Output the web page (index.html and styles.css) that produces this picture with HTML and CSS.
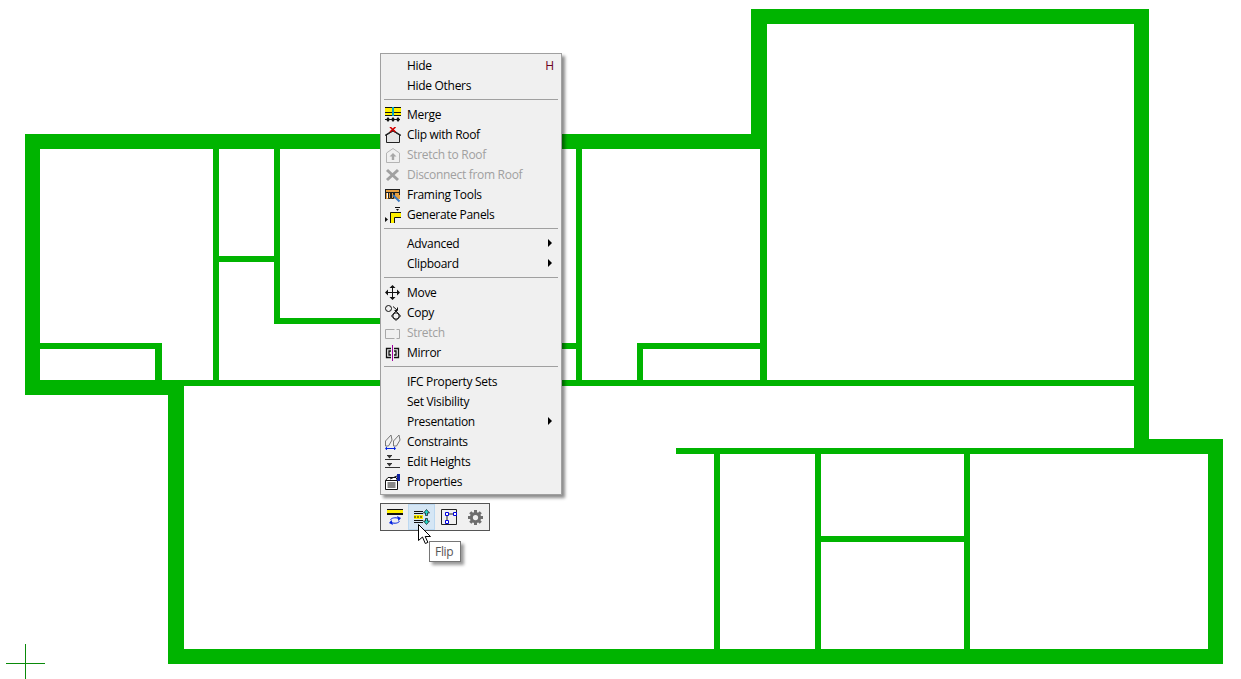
FILE: index.html
```html
<!DOCTYPE html>
<html lang="en">
<head>
  <meta charset="UTF-8">
  <title>Floor plan context menu</title>
  <link rel="stylesheet" href="styles.css">
</head>
<body>
  <!-- drawing canvas -->
  <svg class="plan" width="1241" height="679" viewBox="0 0 1241 679">
    <path class="walls" fill-rule="evenodd" d="M25 134H751V9H1149V439H1223V664H168V395H25ZM40 149V343H162V380H213V149ZM219 149V256H274V149ZM280 149V318H450V343H576V149ZM219 262V380H576V349H444V324H274V262ZM582 149V380H637V343H760V149ZM643 349V380H760V349ZM40 349V380H155V349ZM767 24V380H1134V24ZM184 386V649H714V454H676V448H1134V386ZM720 454V649H815V454ZM821 454V536H964V454ZM821 542V649H964V542ZM970 454V649H1208V454Z"/>
    <path class="cross" d="M6 663.5H45M25.5 644V679"/>
  </svg>

  <div class="menu">
    <div class="row"><span class="ico"></span><span class="label">Hide</span><span class="key">H</span></div>
    <div class="row"><span class="ico"></span><span class="label">Hide Others</span></div>
    <div class="sep"></div>
    <div class="row">
      <span class="ico"><svg width="16" height="16" viewBox="0 0 16 16"><path fill="#111" d="M0 0h16v1H0zM0 5h16v1H0zM0 8h16v1H0z"/><path fill="#fff000" d="M0 1h16v4H0zM0 6h16v2H0z"/><path fill="#00a8c8" d="M7 0h2v9H7z"/><path fill="#111" d="M0 12h15v1H0zM3 10l2 2.500L3 15l-2-2.500zM8 10l2 2.500L8 15l-2-2.500zM13 10l2 2.500-2 2.500-2-2.500z"/></svg></span>
      <span class="label">Merge</span>
    </div>
    <div class="row">
      <span class="ico"><svg width="16" height="16" viewBox="0 0 16 16"><path fill="#e4e4e4" stroke="#222" d="M1.500 15.500V8L8 4l6.500 4v7.500z"/><path fill="none" stroke="#222" stroke-width="1.300" d="M0 8.500 8 3.500l8 5"/><path stroke="#d00000" stroke-width="1.600" d="M5 0l5.500 5M10.500 0 5 5"/></svg></span>
      <span class="label">Clip with Roof</span>
    </div>
    <div class="row off">
      <span class="ico"><svg width="16" height="16" viewBox="0 0 16 16"><path fill="none" stroke="#b4b4b4" d="M1.500 15.500V6L8 1.500 14.500 6v9.500z"/><path fill="#a8a8a8" d="M8 6l3.500 3.500H9.200V13H6.800V9.500H4.500z"/></svg></span>
      <span class="label">Stretch to Roof</span>
    </div>
    <div class="row off">
      <span class="ico"><svg width="16" height="16" viewBox="0 0 16 16"><path stroke="#a0a0a0" stroke-width="3" d="M2 3l11 10M13 3 2 13"/></svg></span>
      <span class="label">Disconnect from Roof</span>
    </div>
    <div class="row">
      <span class="ico"><svg width="16" height="16" viewBox="0 0 16 16"><path fill="#e8a040" d="M0 2h15v10H0z"/><path fill="#fff" d="M2 6h1v5H2zm3 0h1v5H5zm3 0h1v4H8z"/><path fill="none" stroke="#222" d="M.5 2.500h14M.5 5.500h14M.5 2v10M3.500 5.500v6h2v-6M6.500 5.500v6h2v-6M9.500 5.500v4M14.500 2v6"/><path stroke="#3a78c0" stroke-width="2" d="M8 8l6.500 6.500"/></svg></span>
      <span class="label">Framing Tools</span>
    </div>
    <div class="row">
      <span class="ico"><svg width="16" height="16" viewBox="0 0 16 16"><path fill="#fff000" d="M5 16V5h11v5H9.500v6z"/><path fill="none" stroke="#111" d="M5.500 16V5.500H16M9.500 16v-5.500H16"/><path fill="#111" d="M0 10l3 2.500L0 15zM10 0h5v1h-5zM11 2h3l-1.500 2z"/></svg></span>
      <span class="label">Generate Panels</span>
    </div>
    <div class="sep"></div>
    <div class="row"><span class="ico"></span><span class="label">Advanced</span><span class="arrow"></span></div>
    <div class="row"><span class="ico"></span><span class="label">Clipboard</span><span class="arrow"></span></div>
    <div class="sep"></div>
    <div class="row">
      <span class="ico"><svg width="16" height="16" viewBox="0 0 16 16"><path fill="none" stroke="#111" d="M7.500 2v12M2 7.500h12"/><path fill="#111" d="M7.500 0l3 3h-6zM7.500 15l-3-3h6zM0 7.500l3-3v6zM15 7.500l-3 3v-6z"/></svg></span>
      <span class="label">Move</span>
    </div>
    <div class="row">
      <span class="ico"><svg width="16" height="16" viewBox="0 0 16 16"><circle cx="3.500" cy="3.500" r="3" fill="none" stroke="#111"/><path fill="none" stroke="#111" d="M11 6 15.500 11 11 15.500 6.500 11z"/><circle cx="11" cy="11" r="3.200" fill="none" stroke="#111"/><path fill="none" stroke="#111" d="M8 1.500l4 3.500M9.500 5.500H12.500V2.500"/></svg></span>
      <span class="label">Copy</span>
    </div>
    <div class="row off">
      <span class="ico"><svg width="16" height="16" viewBox="0 0 16 16"><path fill="none" stroke="#a8a8a8" d="M9.500 4.500H.5v9h9M11.500 4.500h3v9h-3"/></svg></span>
      <span class="label">Stretch</span>
    </div>
    <div class="row">
      <span class="ico"><svg width="16" height="16" viewBox="0 0 16 16"><path fill="none" stroke="#111" stroke-width="1.300" d="M6 3.500H1.500v9H6M6 6H4v4h2M9 3.500h4.500v9H9M9 6h2v4H9"/><path stroke="#a000a0" d="M7.500 0v16"/></svg></span>
      <span class="label">Mirror</span>
    </div>
    <div class="sep"></div>
    <div class="row"><span class="ico"></span><span class="label">IFC Property Sets</span></div>
    <div class="row"><span class="ico"></span><span class="label">Set Visibility</span></div>
    <div class="row"><span class="ico"></span><span class="label">Presentation</span><span class="arrow"></span></div>
    <div class="row">
      <span class="ico"><svg width="16" height="16" viewBox="0 0 16 16"><path fill="none" stroke="#777" d="M.5 12V7L6 1l1 5-3.500 6zM8.500 12V7L14 1l1 5-3.500 6z"/><path stroke="#0020e0" d="M1 14.500h9"/><path fill="#0020e0" d="M0 14.500l2-2v4zM11 14.500l-2-2v4z"/></svg></span>
      <span class="label">Constraints</span>
    </div>
    <div class="row">
      <span class="ico"><svg width="16" height="16" viewBox="0 0 16 16"><path fill="none" stroke="#333" d="M0 5.500h15M0 13.500h15M2 1.500h5M2 9.500h5"/><path fill="#333" d="M2.500 2h4L4.500 4.500zM2.500 10h4l-2 2.500z"/></svg></span>
      <span class="label">Edit Heights</span>
    </div>
    <div class="row">
      <span class="ico"><svg width="17" height="16" viewBox="0 0 17 16"><path fill="#fff" stroke="#111" d="M.5 6.500h12v9H.5zM.5 6.500 3 3.500h8l1.500 3"/><path stroke="#111" d="M2.500 9h8M2.500 11h8M2.500 13h8"/><path stroke="#111" d="M5 5 12 2"/><path fill="#1020a0" d="M12 0h3v7h-3z"/></svg></span>
      <span class="label">Properties</span>
    </div>
  </div>

  <div class="mini">
    <span class="tool">
      <svg width="16" height="16" viewBox="0 0 16 16"><path fill="#111" d="M0 0h16v1H0zM0 4h16v2H0z"/><path fill="#fff000" d="M0 1h16v3H0z"/><path fill="none" stroke="#0020e0" d="M3.500 11c.5-2 5-3 8-1.500M12.500 12c-.5 2-5 3-8 1.500"/><path fill="#0020e0" d="M10 7l4 2-2.500 3zM6 16l-4-2 2.500-3z"/></svg>
    </span>
    <span class="tool on">
      <svg width="16" height="16" viewBox="0 0 16 16"><path fill="#111" d="M0 2h9v1H0zM0 4h9v1H0zM0 11h9v1H0zM0 13h9v1H0z"/><path fill="#fff000" d="M0 6h9v4H0z"/><path stroke="#111" stroke-dasharray="2 1" d="M0 8h9"/><path fill="#20d8c8" stroke="#111" stroke-width=".7" d="M12.500 .5l3 3.500h-2v2.500h-2V4h-2zM12.500 15.500l3-3.500h-2V9.500h-2V12h-2z"/></svg>
    </span>
    <span class="tool">
      <svg width="16" height="16" viewBox="0 0 16 16"><path fill="none" stroke="#222" d="M.5.500h15v15H.5z"/><path fill="none" stroke="#222" d="M6 13V5h8"/><path fill="#fff" stroke="#0000e0" d="M4.500 3.500h3v3h-3zM12.500 3.500h3v3h-3zM4.500 11.500h3v3h-3z"/></svg>
    </span>
    <span class="tool">
      <svg width="15" height="15" viewBox="0 0 20 20"><circle cx="10" cy="10" r="5.500" fill="none" stroke="#6e6e6e" stroke-width="4"/><path stroke="#6e6e6e" stroke-width="4" d="M10 0v5M10 15v5M0 10h5M15 10h5M3 3l3.500 3.500M13.500 13.500 17 17M17 3l-3.500 3.500M6.500 13.500 3 17"/></svg>
    </span>
  </div>

  <div class="tip">Flip</div>

  <svg class="cursor" width="14" height="22" viewBox="0 0 14 22"><path fill="#fff" stroke="#000" d="M.5.500v16l4-3.500 2.800 6.500 2.600-1.100L7.200 12.500h5.300z"/></svg>
</body>
</html>
```

FILE: styles.css
```css
body {
  margin: 0;
  width: 1241px;
  height: 679px;
  position: relative;
  overflow: hidden;
  background: #fff;
  font-family: 'Open Sans', 'Noto Sans', Arial, sans-serif;
  font-size: 12px;
  color: #000;
}
.plan {
  position: absolute;
  left: 0;
  top: 0;
}
.walls {
  fill: #00b400;
}
.cross {
  fill: none;
  stroke: #0a8a0a;
  stroke-width: 1;
}
.menu {
  position: absolute;
  left: 380px;
  top: 53px;
  width: 180px;
  padding: 2px 0;
  background: #f0f0f0;
  border: 1px solid #a0a0a0;
  box-shadow: 3px 3px 3px rgba(0,0,0,0.45);
}
.row {
  display: flex;
  align-items: center;
  height: 20px;
  padding-right: 7px;
}
.ico {
  width: 26px;
  height: 16px;
  padding-left: 4px;
  box-sizing: border-box;
  flex-shrink: 0;
}
.ico svg {
  display: block;
}
.label {
  flex: 1;
  white-space: nowrap;
  letter-spacing: -0.3px;
  margin-bottom: 2px;
}
.off .label {
  color: #a0a0a0;
}
.key {
  color: #6b0020;
  margin-bottom: 2px;
}
.arrow {
  width: 0;
  height: 0;
  border-left: 4px solid #000;
  border-top: 4px solid transparent;
  border-bottom: 4px solid transparent;
  margin-right: 2px;
  margin-bottom: 2px;
}
.sep {
  height: 1px;
  margin: 3px 3px 5px 3px;
  background: #a0a0a0;
}
.mini {
  position: absolute;
  left: 380px;
  top: 503px;
  display: flex;
  height: 26px;
  background: #f0f0f0;
  border: 1px solid #555;
}
.tool {
  width: 27px;
  display: flex;
  align-items: center;
  justify-content: center;
  box-sizing: border-box;
}
.tool.on {
  background: #d5e6f5;
  border: 1px solid #bcd8f0;
}
.tip {
  position: absolute;
  left: 429px;
  top: 541px;
  padding: 2px 7px 2px 5px;
  height: 15px;
  line-height: 15px;
  letter-spacing: -0.3px;
  background: #fff;
  border: 1px solid #767676;
  color: #555;
  box-shadow: 3px 3px 3px rgba(0,0,0,0.4);
}
.cursor {
  position: absolute;
  left: 418px;
  top: 524px;
}
```
